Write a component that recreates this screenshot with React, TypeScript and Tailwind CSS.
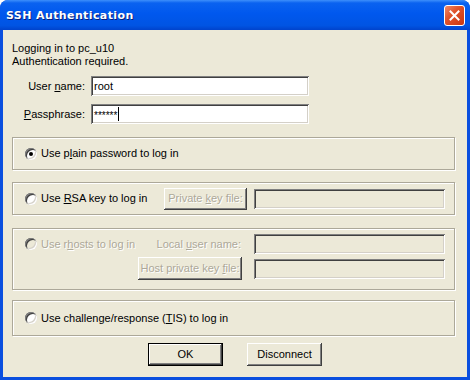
import React from 'react';

const font = { fontFamily: '"Liberation Sans", Arial, sans-serif' };

const sunken =
  'shadow-[inset_1px_1px_0_#808080,inset_-1px_-1px_0_#ffffff,inset_2px_2px_0_#404040,inset_-2px_-2px_0_#d4d0c8]';
const raised =
  'shadow-[inset_-1px_-1px_0_#404040,inset_1px_1px_0_#ffffff,inset_-2px_-2px_0_#808080]';
const disabledText = 'text-[#aca899] [text-shadow:1px_1px_0_#ffffff]';

const Radio: React.FC<{ checked?: boolean; disabled?: boolean }> = ({ checked, disabled }) => (
  <div
    className={`w-[12px] h-[12px] rounded-full flex items-center justify-center shrink-0 ${sunken} ${
      disabled ? 'bg-[#ece9d8]' : 'bg-white'
    }`}
  >
    {checked && <div className="w-[4px] h-[4px] rounded-full bg-black" />}
  </div>
);

const Group: React.FC<{ className?: string; children: React.ReactNode }> = ({ className, children }) => (
  <div
    className={`border border-[#aca899] shadow-[inset_1px_1px_0_#ffffff,1px_1px_0_#ffffff] pl-[12px] pr-[9px] ${className ?? ''}`}
  >
    {children}
  </div>
);

const Field: React.FC<{ value?: React.ReactNode; disabled?: boolean; className?: string }> = ({
  value,
  disabled,
  className,
}) => (
  <div
    className={`h-[20px] flex items-center pl-[3px] ${sunken} ${disabled ? 'bg-[#ece9d8]' : 'bg-white'} ${
      className ?? ''
    }`}
  >
    {value}
  </div>
);

const Button: React.FC<{
  children: React.ReactNode;
  disabled?: boolean;
  isDefault?: boolean;
  className?: string;
}> = ({ children, disabled, isDefault, className }) => (
  <div
    className={`flex items-center justify-center bg-[#ece9d8] ${
      isDefault ? 'border border-black ' : ''
    }${raised} ${disabled ? disabledText : 'text-black'} ${className ?? ''}`}
  >
    <span>{children}</span>
  </div>
);

const App: React.FC = () => {
  return (
    <div className="w-[470px] h-[380px] bg-white" style={font}>
      <div className="w-[470px] h-[380px] flex flex-col rounded-t-[8px] overflow-hidden bg-[#0a4fdf] text-[11px] leading-[13px] text-black">
        {/* title bar */}
        <div className="h-[30px] shrink-0 flex items-center justify-between pl-[6px] pr-[5px] bg-[linear-gradient(to_bottom,#3d8ffb_0%,#0a62f0_10%,#0058ee_45%,#0054e3_85%,#0043cc_100%)]">
          <span
            className="text-white font-bold text-[11px] tracking-[0.4px] [text-shadow:1px_1px_0_#0a1e78]"
            style={{ fontFamily: '"DejaVu Sans", Verdana, sans-serif' }}
          >
            SSH Authentication
          </span>
          <div className="w-[21px] h-[21px] rounded-[3px] border border-white bg-[linear-gradient(to_bottom_right,#ef8a6a_0%,#e0532c_40%,#c8360f_100%)] flex items-center justify-center">
            <svg width="11" height="11" viewBox="0 0 11 11">
              <path d="M1.5 1.5 L9.5 9.5 M9.5 1.5 L1.5 9.5" stroke="#fff" strokeWidth="2" strokeLinecap="square" />
            </svg>
          </div>
        </div>

        {/* body */}
        <div className="flex-1 mx-[3px] mb-[3px] bg-[#ece9d8] flex flex-col pl-[9px] pr-[12px] pt-[12px]">
          <div>Logging in to pc_u10</div>
          <div>Authentication required.</div>

          <div className="flex items-center mt-[8px]">
            <div className="w-[79px] text-right pr-[6px]">
              User <u>n</u>ame:
            </div>
            <Field value="root" className="w-[218px]" />
          </div>
          <div className="flex items-center mt-[8px]">
            <div className="w-[79px] text-right pr-[6px]">
              <u>P</u>assphrase:
            </div>
            <Field
              className="w-[218px]"
              value={
                <span className="flex items-center">
                  <span className="text-[10px] leading-[10px] mt-[3px]">******</span>
                  <span className="w-[1px] h-[14px] bg-black ml-[1px]" />
                </span>
              }
            />
          </div>

          <Group className="mt-[13px] h-[33px] flex items-center">
            <Radio checked />
            <span className="ml-[4px]">
              Use p<u>l</u>ain password to log in
            </span>
          </Group>

          <Group className="mt-[12px] h-[33px] flex items-center">
            <div className="flex-1 flex items-center">
              <Radio />
              <span className="ml-[4px]">
                Use <u>R</u>SA key to log in
              </span>
            </div>
            <Button disabled className="w-[83px] h-[22px]">
              Private <u>k</u>ey file:
            </Button>
            <Field disabled className="w-[191px] ml-[7px]" />
          </Group>

          <Group className="mt-[13px] h-[62px] flex pt-[5px]">
            <div className="flex-1 flex items-start">
              <div className="flex items-center h-[20px]">
                <Radio disabled />
                <span className={`ml-[4px] ${disabledText}`}>
                  Use r<u>h</u>osts to log in
                </span>
              </div>
            </div>
            <div className="flex flex-col gap-[3px]">
              <div className="flex items-center">
                <div className={`w-[104px] text-right pr-[1px] ${disabledText}`}>
                  Local <u>u</u>ser name:
                </div>
                <Field disabled className="w-[191px] ml-[12px]" />
              </div>
              <div className="flex items-center">
                <Button disabled className="w-[104px] h-[23px]">
                  Host private key <u>f</u>ile:
                </Button>
                <Field disabled className="w-[191px] ml-[12px]" />
              </div>
            </div>
          </Group>

          <Group className="mt-[10px] h-[36px] flex items-center">
            <Radio />
            <span className="ml-[4px]">
              Use challenge/response (<u>T</u>IS) to log in
            </span>
          </Group>

          <div className="flex justify-center gap-[24px] mt-[7px] pl-[3px]">
            <Button isDefault className="w-[75px] h-[23px]">
              OK
            </Button>
            <Button className="w-[75px] h-[23px]">Disconnect</Button>
          </div>
        </div>
      </div>
    </div>
  );
};

export default App;
